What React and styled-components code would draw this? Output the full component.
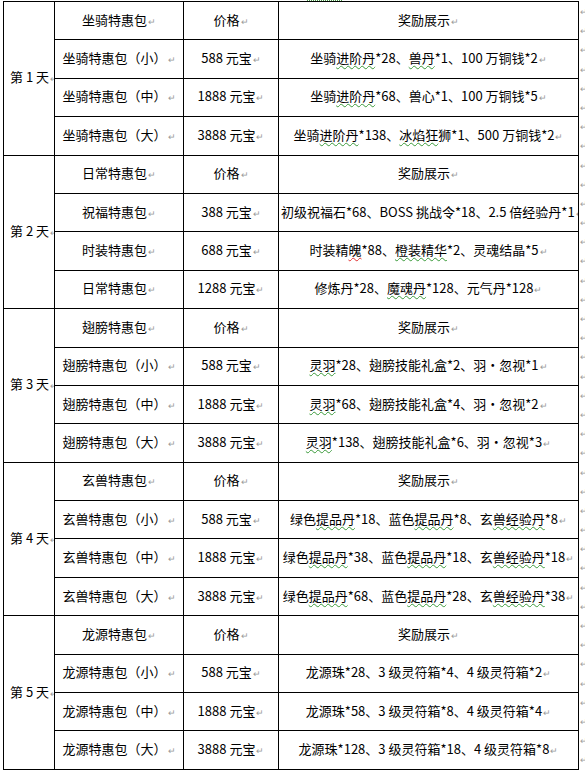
import React from "react";
import styled, { createGlobalStyle } from "styled-components";

const Global = createGlobalStyle`
  html, body { margin: 0; padding: 0; background: #fff; }
  body { font-family: "Noto Sans CJK SC", "Noto Sans", sans-serif; color: #000; }
`;

const Page = styled.div`
  width: 585px;
  height: 773px;
  overflow: hidden;
  padding-left: 3px;
  box-sizing: border-box;
`;

const Squiggle = styled.div`
  height: 1px;
  width: 36px;
  margin-left: 304px;
  background: repeating-linear-gradient(90deg, #4a9a4a 0 1px, transparent 1px 2px);
`;

const Sheet = styled.div`
  display: flex;
  align-items: flex-start;
  gap: 1px;
`;

const Table = styled.table`
  border-collapse: collapse;
  table-layout: fixed;
  width: 575px;
  font-size: 13px;
`;

const Row = styled.tr`
  height: 38.4px;
`;

const Cell = styled.td`
  border: 1px solid #000;
  padding: 0;
  vertical-align: middle;
`;

const Clip = styled.div`
  overflow: hidden;
  white-space: nowrap;
  text-align: ${(p) => (p.$left ? "left" : "center")};
  padding: ${(p) => (p.$left ? "0 0 0 6px" : "0 2px")};
  line-height: 22px;
`;

const Para = styled.span`
  color: #9a9a9a;
  font-size: 9px;
  margin-left: 1px;
`;

const Spell = styled.span`
  text-decoration: underline wavy ${(p) => (p.$red ? "#e03030" : "#3a9a3a")};
  text-decoration-thickness: 1px;
  text-underline-offset: 2px;
`;

const Marks = styled.div`
  display: flex;
  flex-direction: column;
  padding-top: 1px;
`;

const Mark = styled.div`
  height: 19.2px;
  line-height: 19.2px;
  font-size: 9px;
  color: #a0a0a0;
`;

const days = [
  {
    day: 1,
    title: "坐骑特惠包",
    rows: [
      ["坐骑特惠包（小）", "588 元宝", "坐骑[进阶丹]*28、[兽丹]*1、100 万铜钱*2"],
      ["坐骑特惠包（中）", "1888 元宝", "坐骑[进阶丹]*68、兽心*1、100 万铜钱*5"],
      ["坐骑特惠包（大）", "3888 元宝", "坐骑[进阶丹]*138、[冰焰狂]狮*1、500 万铜钱*2"],
    ],
  },
  {
    day: 2,
    title: "日常特惠包",
    rows: [
      ["祝福特惠包", "388 元宝", "初级祝福石*68、BOSS 挑战令*18、2.5 倍经验丹*1"],
      ["时装特惠包", "688 元宝", "时装精{魄}*88、[橙装精华]*2、灵魂结晶*5"],
      ["日常特惠包", "1288 元宝", "修炼丹*28、[魔魂丹]*128、元气丹*128"],
    ],
  },
  {
    day: 3,
    title: "翅膀特惠包",
    rows: [
      ["翅膀特惠包（小）", "588 元宝", "[灵羽]*28、翅膀技能礼盒*2、羽•忽视*1"],
      ["翅膀特惠包（中）", "1888 元宝", "[灵羽]*68、翅膀技能礼盒*4、羽•忽视*2"],
      ["翅膀特惠包（大）", "3888 元宝", "[灵羽]*138、翅膀技能礼盒*6、羽•忽视*3"],
    ],
  },
  {
    day: 4,
    title: "玄兽特惠包",
    rows: [
      ["玄兽特惠包（小）", "588 元宝", "绿色[提品丹]*18、蓝色[提品丹]*8、玄[兽经验丹]*8"],
      ["玄兽特惠包（中）", "1888 元宝", "绿色[提品丹]*38、蓝色[提品丹]*18、玄[兽经验丹]*18"],
      ["玄兽特惠包（大）", "3888 元宝", "绿色[提品丹]*68、蓝色[提品丹]*28、玄[兽经验丹]*38"],
    ],
  },
  {
    day: 5,
    title: "龙源特惠包",
    rows: [
      ["龙源特惠包（小）", "588 元宝", "龙源珠*28、3 级灵符箱*4、4 级灵符箱*2"],
      ["龙源特惠包（中）", "1888 元宝", "龙源珠*58、3 级灵符箱*8、4 级灵符箱*4"],
      ["龙源特惠包（大）", "3888 元宝", "龙源珠*128、3 级灵符箱*18、4 级灵符箱*8"],
    ],
  },
];

function Rich({ text }) {
  const parts = [];
  const re = /\[([^\]]+)\]|\{([^}]+)\}/g;
  let last = 0;
  let m;
  let k = 0;
  while ((m = re.exec(text))) {
    if (m.index > last) parts.push(text.slice(last, m.index));
    if (m[1]) parts.push(<Spell key={k++}>{m[1]}</Spell>);
    else parts.push(<Spell key={k++} $red>{m[2]}</Spell>);
    last = re.lastIndex;
  }
  if (last < text.length) parts.push(text.slice(last));
  return (
    <Clip>
      {parts}
      <Para>↵</Para>
    </Clip>
  );
}

function DayBlock({ d }) {
  return (
    <>
      <Row>
        <Cell rowSpan={4}>
          <Clip $left>
            第 {d.day} 天<Para>↵</Para>
          </Clip>
        </Cell>
        <Cell><Rich text={d.title} /></Cell>
        <Cell><Rich text="价格" /></Cell>
        <Cell><Rich text="奖励展示" /></Cell>
      </Row>
      {d.rows.map((r, i) => (
        <Row key={i}>
          <Cell><Rich text={r[0]} /></Cell>
          <Cell><Rich text={r[1]} /></Cell>
          <Cell><Rich text={r[2]} /></Cell>
        </Row>
      ))}
    </>
  );
}

export default function App() {
  return (
    <Page>
      <Global />
      <Squiggle />
      <Sheet>
        <Table>
          <colgroup>
            <col style={{ width: 51 }} />
            <col style={{ width: 129 }} />
            <col style={{ width: 95 }} />
            <col style={{ width: 300 }} />
          </colgroup>
          <tbody>
            {days.map((d) => (
              <DayBlock key={d.day} d={d} />
            ))}
          </tbody>
        </Table>
        <Marks>
          {Array.from({ length: 40 }, (_, i) => (
            <Mark key={i}>↵</Mark>
          ))}
        </Marks>
      </Sheet>
    </Page>
  );
}
